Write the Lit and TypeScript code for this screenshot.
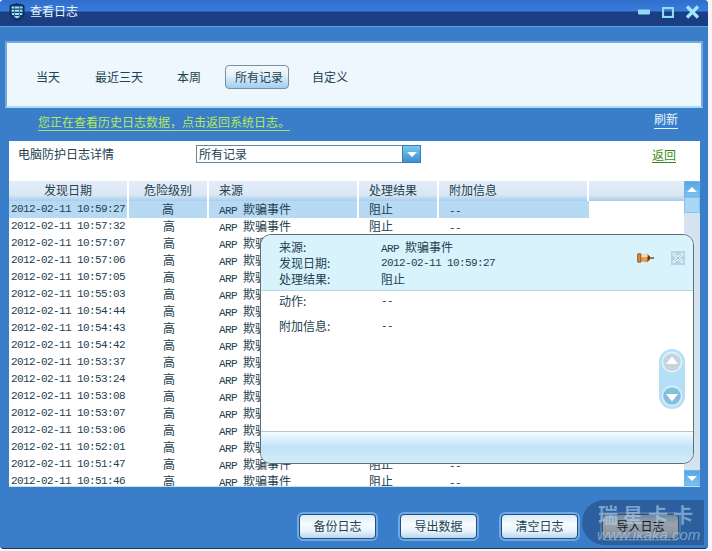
import { LitElement, html, css, svg } from "lit";
import { customElement } from "lit/decorators.js";

const TIMES = ["10:59:27","10:57:32","10:57:07","10:57:06","10:57:05","10:55:03","10:54:44","10:54:43","10:54:42","10:53:37","10:53:24","10:53:08","10:53:07","10:53:06","10:52:01","10:51:47","10:51:46"];

const shield = svg`<svg width="16" height="18" viewBox="0 0 16 18"><path d="M1 2.5 L8 .8 L15 2.5 V10 C15 14 11 16 8 17.3 C5 16 1 14 1 10Z" fill="#0f3a6c" stroke="#0b2a55" stroke-width="1"/><path d="M2.5 3.5H13.5V5.5H2.5ZM2.5 6.8H13.5V8.8H2.5ZM2.8 10H13.2V12H3.2ZM4.5 13H11.5L8 15.4Z" fill="#a8e0ee"/><path d="M5.5 3V15M10.5 3V15" stroke="#2a78a8" stroke-width="1"/></svg>`;
const pin = svg`<svg width="17" height="10" viewBox="0 0 17 10"><path d="M11 5H17" stroke="#5a2a08" stroke-width="1.2"/><path d="M10 .8 L13 3.5 V6.5 L10 9.2Z" fill="#6a3a14"/><path d="M3 1.8 L10.5 .8 V9.2 L3 8.2Z" fill="#e89a48"/><path d="M3 1.8 L10.5 .8 V4 L3 4.5Z" fill="#f8dcae"/><path d="M.8 .8 H3.8 V9.2 H.8 Q-.4 5 .8 .8Z" fill="#d08a44" stroke="#6a4218" stroke-width=".7"/></svg>`;
const closeIcon = svg`<svg width="14" height="14" viewBox="0 0 14 14"><rect width="14" height="14" fill="#b4d4e6"/><path d="M2 2.5 L12 11.5 M12 2.5 L2 11.5" stroke="#f4fbff" stroke-width="2.6"/><path d="M2.5 3 L11.5 11 M11.5 3 L2.5 11" stroke="#7e9cb0" stroke-width=".7"/></svg>`;
const winMin = svg`<svg width="12" height="6" viewBox="0 0 12 6"><rect y="0.5" width="12" height="5" rx="1" fill="#8fdcf8"/></svg>`;
const winMax = svg`<svg width="12" height="11" viewBox="0 0 12 11"><rect x="1" y="1" width="10" height="9" fill="none" stroke="#8fdcf8" stroke-width="2.2"/></svg>`;
const winClose = svg`<svg width="15" height="14" viewBox="0 0 15 14"><path d="M2 1.5 L13 12.5 M13 1.5 L2 12.5" stroke="#a4e6fb" stroke-width="3.2"/></svg>`;
const circleUp = svg`<svg width="22" height="22" viewBox="0 0 22 22"><circle cx="11" cy="11" r="9.6" fill="#c6d4de" stroke="#e4f2fa" stroke-width="1.6"/><path d="M11 5.5 L17 13 H5Z" fill="#fff"/></svg>`;
const circleDown = svg`<svg width="22" height="22" viewBox="0 0 22 22"><circle cx="11" cy="11" r="9.6" fill="#84c0dc" stroke="#d6effa" stroke-width="1.6"/><path d="M11 16.5 L5 9 H17Z" fill="#fff"/></svg>`;

@customElement("app-root")
export class AppRoot extends LitElement {
  static styles = css`
    :host { display: block; width: 712px; height: 551px; background: #f4f6f8; overflow: hidden; position: relative;
      font: 12px/16px "Noto Sans CJK SC", "Noto Sans", sans-serif; color: #24414f; }
    .mono { font-family: "Liberation Mono", monospace; font-size: 11px; letter-spacing: -0.6px; }
    .win { width: 708px; height: 548px; background: #3a7dc9; border-radius: 4px; border-bottom: 1px solid #16375f; overflow: hidden; display: flex; flex-direction: column; position: relative; }
    .title { height: 27px; box-sizing: border-box; flex: none; display: flex; align-items: flex-start; padding: 3px 8px 0 9px; color: #e9f4fb; border-bottom: 1px solid #5ea3e6;
      background: linear-gradient(#2f6ecb 0, #3a7bdb 11px, #1b3f86 12px, #1b3c80 100%); }
    .title .name { margin-left: 5px; line-height: 15px; }
    .ctrls { margin-left: auto; display: flex; align-items: center; gap: 11.5px; height: 18px; }
    .panel { margin: 14px 5px 0 5px; height: 67px; box-sizing: border-box; background: #eef7fe; border: 2px solid #74a9dc; border-bottom-color: #a6dcf8; display: flex; align-items: center; padding: 5px 0 0 19px; gap: 14px; flex: none; }
    .tab { height: 24px; line-height: 22px; box-sizing: border-box; padding: 0 9px; border: 1px solid transparent; border-radius: 4px; }
    .tab.first { margin-right: 1px; }
    .tab.last { margin-left: -1px; }
    .tab.on { padding: 0 5px 0 9px; border-color: #7c8f9e; background: linear-gradient(#f4f9fd 0, #e6f2fb 40%, #9fcdee 100%); }
    .links { height: 33px; flex: none; box-sizing: border-box; display: flex; align-items: flex-start; padding: 6px 30px 0 38px; justify-content: space-between; }
    .warn { color: #b4ea5c; border-bottom: 1px solid #a6dc70; height: 15px; line-height: 14px; margin-top: 1px; }
    .refresh { color: #eaf6ff; border-bottom: 1px solid #eaf6ff; height: 16px; line-height: 14px; margin-top: -2px; }
    .sheet { margin: 0 8px 0 9px; height: 346px; flex: none; background: #fff; display: flex; flex-direction: column; border-bottom: 1px solid #bfe4f8; box-sizing: border-box; }
    .filter { height: 40px; flex: none; display: flex; align-items: flex-start; padding: 4px 24px 0 9px; box-sizing: border-box; }
    .filter .lbl { width: 178px; line-height: 18px; }
    .select { width: 225px; height: 18px; box-sizing: border-box; border: 1px solid #66879c; border-right: none; display: flex; line-height: 16px; padding-left: 2px; justify-content: space-between; }
    .drop { width: 19px; height: 18px; margin-top: -1px; display: flex; align-items: center; justify-content: center; background: linear-gradient(#76caf2, #3d8fd0); border: 1px solid #3c7cb4; box-sizing: border-box; }
    .tri-d { width: 0; height: 0; border-left: 5px solid transparent; border-right: 5px solid transparent; border-top: 5px solid #fff; }
    .tri-u { width: 0; height: 0; border-left: 5px solid transparent; border-right: 5px solid transparent; border-bottom: 5px solid #fff; }
    .back { margin-left: auto; color: #3b8a16; border-bottom: 1px solid #3b8a16; height: 16px; line-height: 17px; margin-top: 1px; }
    .listwrap { flex: 1; min-height: 0; display: flex; overflow: hidden; }
    .list { width: 675px; flex: none; overflow: hidden; }
    .head { height: 20px; display: grid; grid-template-columns: 120px 80px 150px 80px 150px 1fr; background: linear-gradient(#e2edf8 0, #dae7f5 70%, #a8cdec 100%); }
    .head div { line-height: 18px; border-right: 2px solid #fff; box-sizing: border-box; }
    .head div:last-child { border-right: none; }
    .row { height: 17px; width: 580px; display: grid; grid-template-columns: 120px 80px 150px 80px 150px; line-height: 15px; white-space: nowrap; }
    .row.sel { background: #b6d9f4; }
    .row.sel > div { border-right: 2px solid #fff; box-sizing: border-box; }
    .row.sel > div:last-child { border-right: none; }
    .head .c, .row .c { text-align: center; }
    .d { padding: 1px 0 0 2px; font-family: "Liberation Mono", monospace; font-size: 11px; letter-spacing: -0.6px; }
    .p { padding-left: 10px; }
    .sb { width: 16px; flex: none; background: #d5e3f1; display: flex; flex-direction: column; }
    .sbtn { height: 16px; flex: none; background: linear-gradient(#52a8e4, #7cc0ee); border: 1px solid #6fb4e6; box-sizing: border-box; display: flex; align-items: center; justify-content: center; }
    .thumb { height: 16px; flex: none; background: #a9d6f4; border: 1px solid #8cc2ea; box-sizing: border-box; }
    .sp { flex: 1; }
    .foot { flex: 1; display: flex; justify-content: flex-end; align-items: flex-start; gap: 20px; padding: 25px 27px 0 0; }
    .btn { width: 81px; height: 29px; box-sizing: border-box; border: 2px solid #6ea9e8; border-radius: 6px; display: flex; }
    .btn span { flex: 1; border: 1px solid #264f7c; border-radius: 4px; text-align: center; line-height: 21px; background: linear-gradient(#d8ebf8 0, #f8fcff 40%, #e8f3fb 70%, #b8d6ee 100%); }
    .btn.dim { position: relative; z-index: 2; border-color: #4a78ac; }
    .btn.dim span { color: #0e1a24; border-color: #3d5066; background: linear-gradient(#6f8aa8 0, #9aa2ac 40%, #8f98a2 70%, #6d88a8 100%); }
    .pop { position: absolute; left: 260px; top: 234px; width: 434px; height: 230px; box-sizing: border-box; background: #fff; border: 1px solid #5e6f78; border-radius: 11px; overflow: hidden; display: flex; flex-direction: column; }
    .phead { height: 56px; flex: none; box-sizing: border-box; background: #d9f3fd; border-bottom: 1px solid #bcd4e0; padding: 4px 8px 0 18px; display: flex; }
    .kv { display: grid; grid-template-columns: 102px 1fr; grid-auto-rows: 16px; line-height: 16px; }
    .pins { margin-left: auto; display: flex; align-items: center; gap: 17px; height: 44px; margin-top: -3px; }
    .pbody { flex: 1; padding: 2px 0 0 18px; display: flex; flex-direction: column; gap: 9px; }
    .pfoot { height: 32px; flex: none; border-top: 1px solid #b4c8cc; box-sizing: border-box; background: linear-gradient(#f4fbff 0, #bfe3f7 50%, #c2e4f8 55%, #d4eaf8 100%); }
    .pill { position: absolute; left: 398px; top: 114px; width: 26px; height: 60px; border-radius: 13px; background: #b4dff5; display: flex; flex-direction: column; justify-content: space-between; align-items: center; padding: 2px 0; box-sizing: border-box; }
    .pill svg { display: block; }
    .mark { position: absolute; left: 582px; top: 500px; width: 122px; height: 45px; border-radius: 24px 0 0 24px; overflow: hidden; }
    .mark.bg { background: rgba(28, 66, 116, .5); z-index: 1; }
    .mark.fg { z-index: 3; color: rgba(190, 220, 245, .55); }
    .mark .cn { font: bold 20px/24px "Noto Sans CJK SC", sans-serif; letter-spacing: 5px; margin-top: 3px; padding-left: 16px; white-space: nowrap; }
    .mark .en { font: italic 15px/15px "Liberation Sans", sans-serif; padding-left: 15px; white-space: nowrap; }
  `;

  render() {
    return html`
      <div class="mark bg"></div>
      <div class="win">
        <div class="title">${shield}<span class="name">查看日志</span>
          <div class="ctrls">${winMin}${winMax}${winClose}</div>
        </div>
        <div class="panel">
          <div class="tab first">当天</div>
          <div class="tab">最近三天</div>
          <div class="tab">本周</div>
          <div class="tab on">所有记录</div>
          <div class="tab last">自定义</div>
        </div>
        <div class="links">
          <div class="warn">您正在查看历史日志数据，点击返回系统日志。</div>
          <div class="refresh">刷新</div>
        </div>
        <div class="sheet">
          <div class="filter">
            <div class="lbl">电脑防护日志详情</div>
            <div class="select">所有记录<div class="drop"><div class="tri-d"></div></div></div>
            <div class="back">返回</div>
          </div>
          <div class="listwrap">
            <div class="list">
              <div class="head">
                <div class="c">发现日期</div><div class="c">危险级别</div><div class="p">来源</div><div class="p">处理结果</div><div class="p">附加信息</div><div></div>
              </div>
              ${TIMES.map((t, i) => html`
                <div class="row ${i === 0 ? "sel" : ""}">
                  <div class="d">2012-02-11 ${t}</div>
                  <div class="c">高</div>
                  <div class="p"><span class="mono">ARP </span>欺骗事件</div>
                  <div class="p">阻止</div>
                  <div class="p"><span class="mono">--</span></div>
                </div>`)}
            </div>
            <div class="sb">
              <div class="sbtn"><div class="tri-u"></div></div>
              <div class="thumb"></div>
              <div class="sp"></div>
              <div class="sbtn"><div class="tri-d"></div></div>
            </div>
          </div>
        </div>
        <div class="foot">
          <div class="btn"><span>备份日志</span></div>
          <div class="btn"><span>导出数据</span></div>
          <div class="btn"><span>清空日志</span></div>
          <div class="btn dim"><span>导入日志</span></div>
        </div>
      </div>
      <div class="pop">
        <div class="phead">
          <div class="kv">
            <div>来源:</div><div><span class="mono">ARP </span>欺骗事件</div>
            <div>发现日期:</div><div class="mono">2012-02-11 10:59:27</div>
            <div>处理结果:</div><div>阻止</div>
          </div>
          <div class="pins">${pin}${closeIcon}</div>
        </div>
        <div class="pbody">
          <div class="kv"><div>动作:</div><div class="mono">--</div></div>
          <div class="kv"><div>附加信息:</div><div class="mono">--</div></div>
        </div>
        <div class="pfoot"></div>
        <div class="pill">${circleUp}${circleDown}</div>
      </div>
      <div class="mark fg"><div class="cn">瑞星卡卡</div><div class="en">www.ikaka.com</div></div>
    `;
  }
}
